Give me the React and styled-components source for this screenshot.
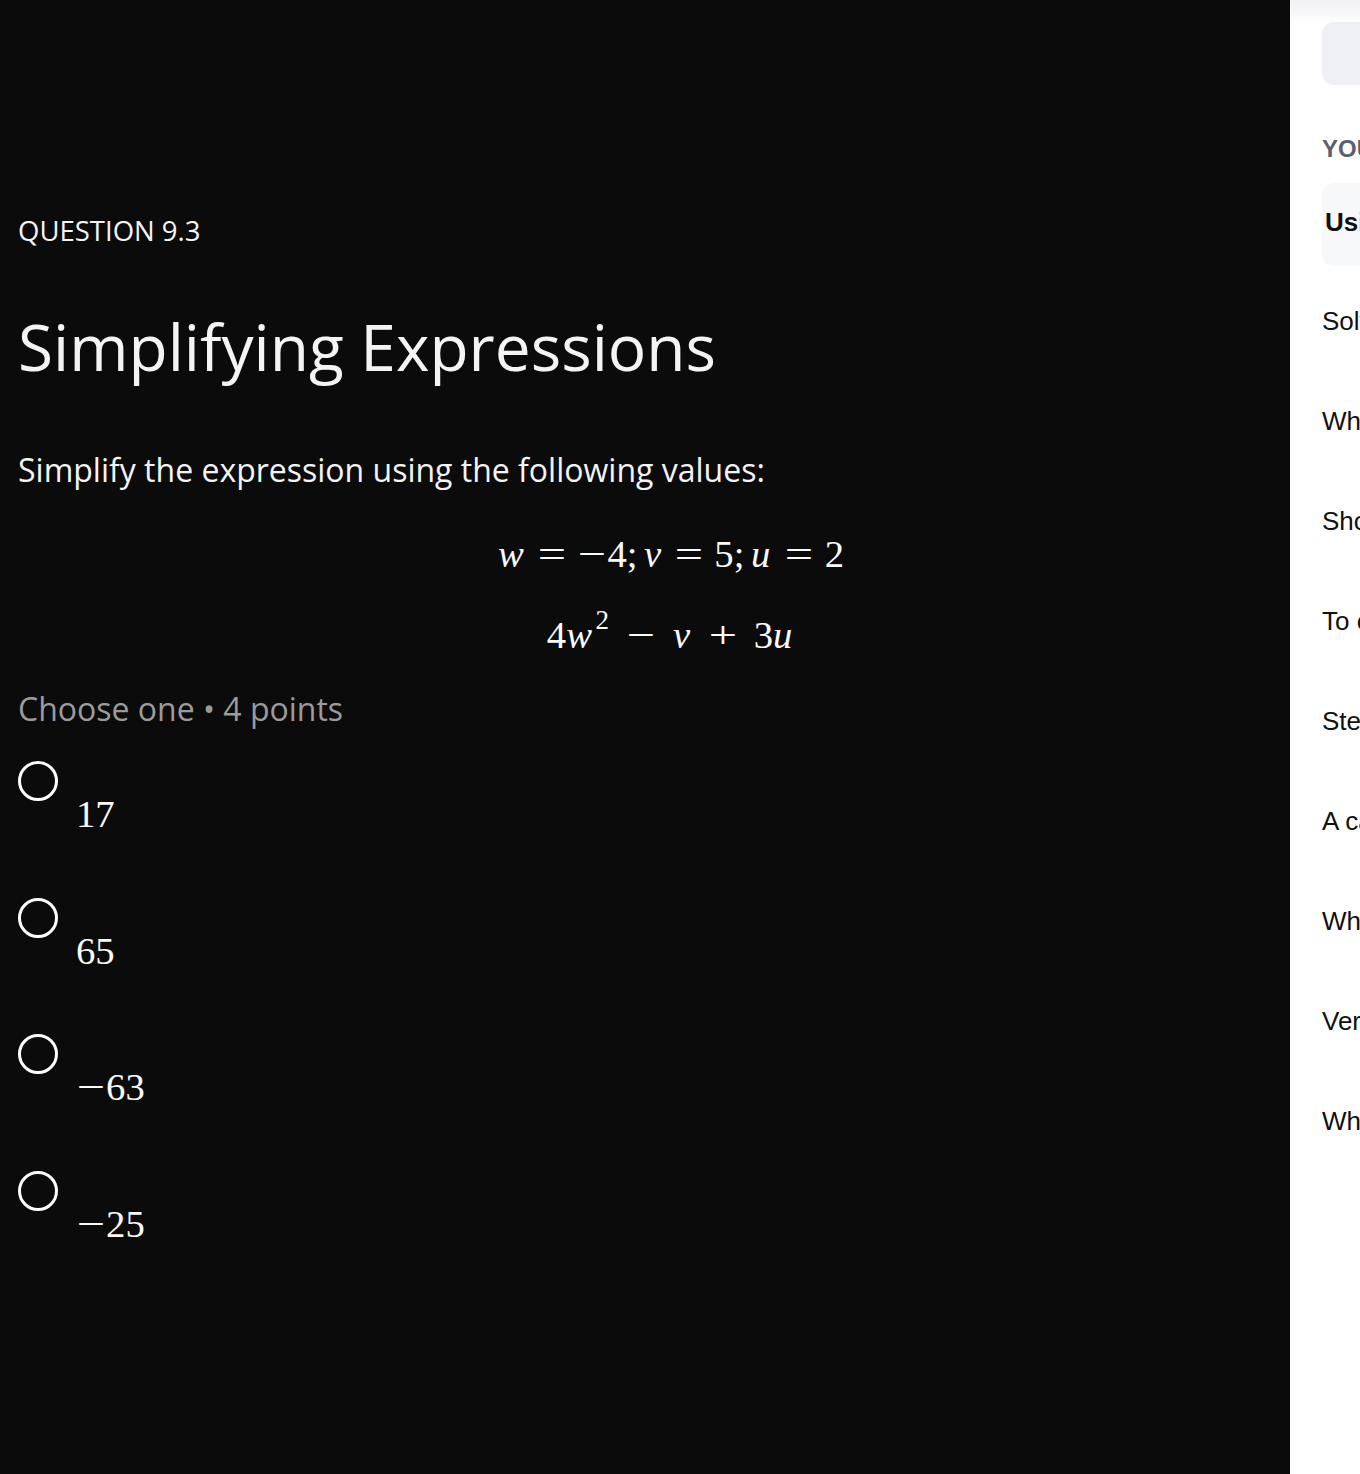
import React from "react";
import styled, { createGlobalStyle } from "styled-components";

const Global = createGlobalStyle`
  html, body { margin: 0; padding: 0; background: #0b0b0b; }
  * { box-sizing: border-box; }
`;

const Page = styled.div`
  display: flex;
  width: 1360px;
  height: 1474px;
  overflow: hidden;
`;

const Main = styled.main`
  flex: 0 0 1290px;
  background: #0b0b0b;
  padding: 210px 18px 0;
  font-family: "Open Sans", "Noto Sans", sans-serif;
  color: #f4f4f4;
`;

const Eyebrow = styled.div`
  font-size: 27.5px;
  line-height: 42px;
`;

const Title = styled.h1`
  margin: 56px 0 0;
  font-size: 64px;
  line-height: 77px;
  font-weight: 400;
`;

const Prompt = styled.p`
  margin: 61px 0 0;
  font-size: 32px;
  line-height: 48px;
`;

const MathBlock = styled.div`
  margin-top: 37px;
  padding-left: 52px;
  display: flex;
  flex-direction: column;
  align-items: center;
  gap: 35px;
`;

const MathLine = styled.div`
  height: 46px;
  font-family: "Liberation Serif", "Times New Roman", serif;
  font-size: 38.7px;
  line-height: 46px;
  white-space: nowrap;
  color: #fafafa;
`;

/* a glyph in a box with the width the math layout gives it */
const G = styled.span`
  display: inline-block;
  width: ${(p) => p.$w}em;
  font-style: ${(p) => (p.$it ? "italic" : "normal")};
  text-align: ${(p) => (p.$center ? "center" : "left")};
`;

const Stretch = styled.span`
  display: inline-block;
  transform: scaleX(${(p) => p.$x ?? 1.3});
`;

const Sup = styled.span`
  display: inline-block;
  width: 0.55em;
  font-size: 0.7em;
  line-height: 1;
  position: relative;
  top: -0.7em;
  padding-left: 0.06em;
`;

const Op = ({ w = 1.334, children, x }) => (
  <G $w={w} $center>
    <Stretch $x={x}>{children}</Stretch>
  </G>
);

const Meta = styled.div`
  margin-top: 27px;
  font-size: 32px;
  line-height: 48px;
  color: #9b9b9b;
`;

const Options = styled.div`
  margin-top: 28px;
  display: flex;
  flex-direction: column;
`;

const Option = styled.label`
  display: flex;
  align-items: flex-start;
  gap: 18px;
  height: 136.7px;
  cursor: pointer;
`;

const Radio = styled.span`
  flex: 0 0 40px;
  width: 40px;
  height: 40px;
  border-radius: 50%;
  border: 3.6px solid #ffffff;
`;

const OptionText = styled.span`
  margin-top: 30px;
  font-family: "Liberation Serif", "Times New Roman", serif;
  font-size: 38.7px;
  line-height: 46px;
  color: #fafafa;
  white-space: nowrap;
`;

const Side = styled.aside`
  flex: 1 1 auto;
  min-width: 0;
  background: linear-gradient(to bottom, #f1f1f3 0px, #ffffff 26px);
  padding: 22px 0 0 32px;
  overflow: hidden;
  font-family: "Liberation Sans", Arial, sans-serif;
  color: #111;
`;

const SearchBox = styled.div`
  width: 400px;
  height: 63px;
  border-radius: 12px;
  background: #eef0f4;
`;

const SectionLabel = styled.div`
  margin-top: 50px;
  font-size: 24px;
  line-height: 28px;
  font-weight: 700;
  color: #5a606c;
  white-space: nowrap;
`;

const Current = styled.div`
  margin-top: 20px;
  width: 400px;
  height: 83px;
  border-radius: 12px;
  background: #f7f8fa;
  padding: 24px 0 0 3px;
  font-size: 26px;
  line-height: 30px;
  font-weight: 700;
  white-space: nowrap;
`;

const List = styled.div`
  margin-top: 41px;
  display: flex;
  flex-direction: column;
`;

const Item = styled.div`
  height: 100px;
  font-size: 26px;
  line-height: 28px;
  white-space: nowrap;
`;

const items = [
  "Solve for x in the equation",
  "What is the value of the expression",
  "Show that the sum is even",
  "To evaluate the expression",
  "Step by step simplification",
  "A car travels at a constant speed",
  "What is the slope of the line",
  "Verify the identity",
  "What is the area of the triangle",
];

const Answer = ({ value }) => {
  const neg = value.startsWith("-");
  const digits = neg ? value.slice(1) : value;
  return (
    <OptionText>
      {neg && <Op w={0.778}>−</Op>}
      {digits}
    </OptionText>
  );
};

export default function App() {
  return (
    <>
      <Global />
      <Page>
        <Main>
          <Eyebrow>QUESTION 9.3</Eyebrow>
          <Title>Simplifying Expressions</Title>
          <Prompt>Simplify the expression using the following values:</Prompt>
          <MathBlock>
            <MathLine>
              <G $w={0.716} $it>w</G>
              <Op>=</Op>
              <Op w={0.778}>−</Op>
              <G $w={0.5}>4</G>
              <G $w={0.445}>;</G>
              <G $w={0.485} $it>v</G>
              <Op>=</Op>
              <G $w={0.5}>5</G>
              <G $w={0.445}>;</G>
              <G $w={0.572} $it>u</G>
              <Op>=</Op>
              <G $w={0.5}>2</G>
            </MathLine>
            <MathLine>
              <G $w={0.5}>4</G>
              <G $w={0.716} $it>w</G>
              <Sup>2</Sup>
              <Op w={1.66}>−</Op>
              <G $w={0.485} $it>v</G>
              <Op w={1.6}>+</Op>
              <G $w={0.5}>3</G>
              <G $w={0.572} $it>u</G>
            </MathLine>
          </MathBlock>
          <Meta>Choose one • 4 points</Meta>
          <Options>
            {["17", "65", "-63", "-25"].map((o) => (
              <Option key={o}>
                <Radio />
                <Answer value={o} />
              </Option>
            ))}
          </Options>
        </Main>
        <Side>
          <SearchBox />
          <SectionLabel>YOUR QUESTION</SectionLabel>
          <Current>Using the following values</Current>
          <List>
            {items.map((t) => (
              <Item key={t}>{t}</Item>
            ))}
          </List>
        </Side>
      </Page>
    </>
  );
}
